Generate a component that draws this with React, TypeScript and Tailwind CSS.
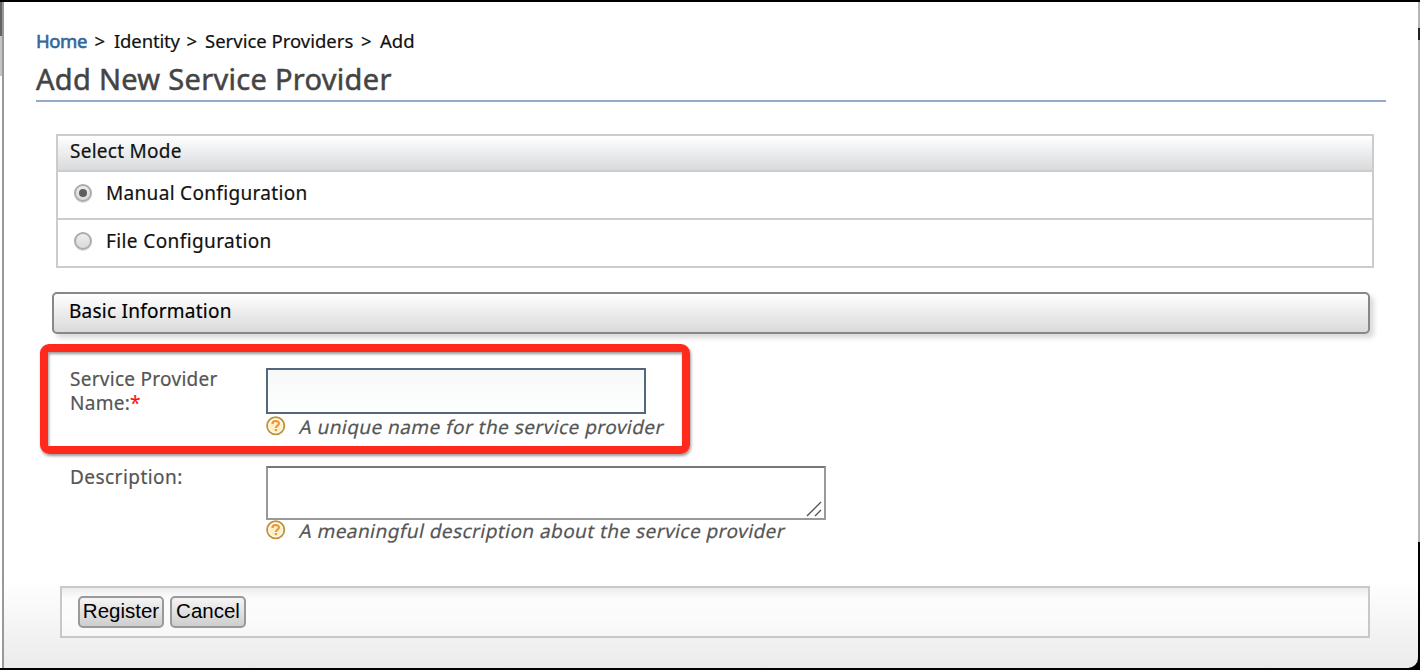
import React from "react";

function HelpIcon() {
  return (
    <svg width="20" height="20" viewBox="0 0 20 20" className="shrink-0">
      <circle cx="9.7" cy="9.8" r="8.6" fill="#fdf0c4" stroke="#bd9440" strokeWidth="1.9" />
      <circle cx="9.7" cy="9.8" r="6.9" fill="none" stroke="#fffbe6" strokeWidth="1.2" />
      <path d="M6.4 8.1C6.4 4.2 13 4.2 13 7.6C13 9.7 9.9 9.5 9.9 12" fill="none" stroke="#ee9143" strokeWidth="2" />
      <rect x="8.8" y="13" width="2.2" height="2.1" fill="#ee9143" />
    </svg>
  );
}

function Radio({ checked = false }: { checked?: boolean }) {
  return (
    <span className="flex h-[18px] w-[18px] items-center justify-center rounded-full border-2 border-[#acacac] bg-linear-to-b from-[#eeeeee] to-[#dadada] shadow-[0_1px_1px_rgba(0,0,0,0.12)]">
      {checked && <span className="h-2 w-2 rounded-full bg-[#5e5e5e]" />}
    </span>
  );
}

export default function App() {
  return (
    <div className="flex h-[670px] w-[1420px] flex-col overflow-hidden bg-black py-[2px] font-['Noto_Sans',sans-serif] text-[19px] leading-6 text-[#111] [-webkit-text-stroke:0.2px]">
      <div className="flex h-[666px]">
        <div className="flex w-[2px] flex-col bg-white">
          <div className="h-[34px] bg-[#626262]" />
          <div className="h-[40px] bg-[#c4c4c4]" />
        </div>
        <main className="flex w-[1416px] flex-col rounded-br-[10px] border-l-2 border-[#999] bg-[linear-gradient(to_bottom,#fff_0px,#fff_578px,#ebebeb_666px)] pl-8">
          <nav className="mt-[27px] flex h-6 items-center whitespace-nowrap text-[18.5px]">
            <a className="w-[58.5px] tracking-[-0.4px] text-[#336699] [-webkit-text-stroke:0.6px]">Home</a>
            <span className="w-[19.5px]">&gt;</span>
            <span className="w-[72.5px] tracking-[-0.15px]">Identity</span>
            <span className="w-[18.5px]">&gt;</span>
            <span className="w-[156px]">Service Providers</span>
            <span className="w-[19px]">&gt;</span>
            <span>Add</span>
          </nav>
          <h1 className="mt-[3px] h-[46px] w-[1350px] border-b-2 border-[#96a9ca] text-[29px] leading-[46px] tracking-[0.3px] text-[#444] [-webkit-text-stroke:0.5px]">
            Add New Service Provider
          </h1>
          <section className="mt-[32px] ml-5 h-[134px] w-[1318px] border-2 border-[#ccc]">
            <h2 className="h-[36px] border-b-2 border-[#ccc] bg-linear-to-b from-white to-[#d8dadc] pl-3 leading-[30px] tracking-[0.27px]">Select Mode</h2>
            <label className="flex h-[48px] items-center border-b-2 border-[#ccc] pb-[5px] pl-4">
              <Radio checked />
              <span className="ml-[14px] tracking-[0.32px]">Manual Configuration</span>
            </label>
            <label className="flex h-[46px] items-center pb-[4px] pl-4">
              <Radio />
              <span className="ml-[14px] tracking-[0.4px]">File Configuration</span>
            </label>
          </section>
          <h2 className="mt-[24px] ml-4 h-[42px] w-[1318px] rounded-[5px] border-2 border-[#888] bg-linear-to-b from-white to-[#dadada] pl-[15px] leading-[34px] tracking-[0.24px] text-black shadow-[4px_4px_5px_rgba(0,0,0,0.15)]">Basic Information</h2>
          <section className="mt-[10px] ml-1 flex h-[110px] w-[650px] rounded-[9px] border-8 border-[#ff2a1c] pl-[22px] text-[#555] shadow-[1px_2px_3px_rgba(0,0,0,0.4),inset_1px_2px_3px_rgba(0,0,0,0.4)]">
            <label className="mt-[15px] w-[196px] tracking-[0.28px]">
              <span className="block">Service Provider</span>
              <span className="block">Name:<span className="text-[#ff1010]">*</span></span>
            </label>
            <div className="pt-[16px]">
              <div className="h-[46px] w-[380px] border-2 border-[#55677d] bg-linear-to-b from-[#f7f8f8] to-[#fefefe]" />
              <div className="mt-[1px] flex h-[22px] items-center whitespace-nowrap">
                <HelpIcon />
                <span className="mt-[2px] ml-[13.5px] -skew-x-12 tracking-[0.44px]">A unique name for the service provider</span>
              </div>
            </div>
          </section>
          <section className="mt-[12px] ml-[34px] flex h-[78px] text-[#555]">
            <label className="-mt-px w-[196px] tracking-[0.45px]">Description:</label>
            <div>
              <div className="flex h-[54px] w-[560px] items-end justify-end border-2 border-[#999] border-t-[#777] bg-white">
                <svg width="19" height="19" viewBox="0 0 19 19"><path d="M2 17L16 3M10 17L16 11" stroke="#555" strokeWidth="1.4" /></svg>
              </div>
              <div className="-mt-px flex h-[22px] items-center whitespace-nowrap">
                <HelpIcon />
                <span className="mt-[2px] ml-[13.5px] -skew-x-12 tracking-[0.44px]">A meaningful description about the service provider</span>
              </div>
            </div>
          </section>
          <div className="mt-[42px] ml-6 flex h-[52px] w-[1310px] gap-[6px] border-2 border-[#c8c8c8] bg-[linear-gradient(to_bottom,#ececec,#fcfcfc_10px,#fbfbfb_30px,#f7f7f7)] pt-2 pl-4 font-['Liberation_Sans',Arial,sans-serif] text-[20.5px] text-black [-webkit-text-stroke:0px]">
            <button className="flex h-8 w-[86px] justify-center rounded-[5px] border-2 border-[#999] bg-linear-to-b from-[#f5f5f5] to-[#cecece] leading-[25px]">Register</button>
            <button className="flex h-8 w-[76px] justify-center rounded-[5px] border-2 border-[#999] bg-linear-to-b from-[#f5f5f5] to-[#cecece] leading-[25px]">Cancel</button>
          </div>
        </main>
        <div className="flex w-[2px] flex-col bg-black">
          <div className="h-[26px] bg-[#b5b5b5]" />
          <div className="h-[12px] bg-[#222]" />
          <div className="h-[502px] bg-[#b5b5b5]" />
        </div>
      </div>
    </div>
  );
}
